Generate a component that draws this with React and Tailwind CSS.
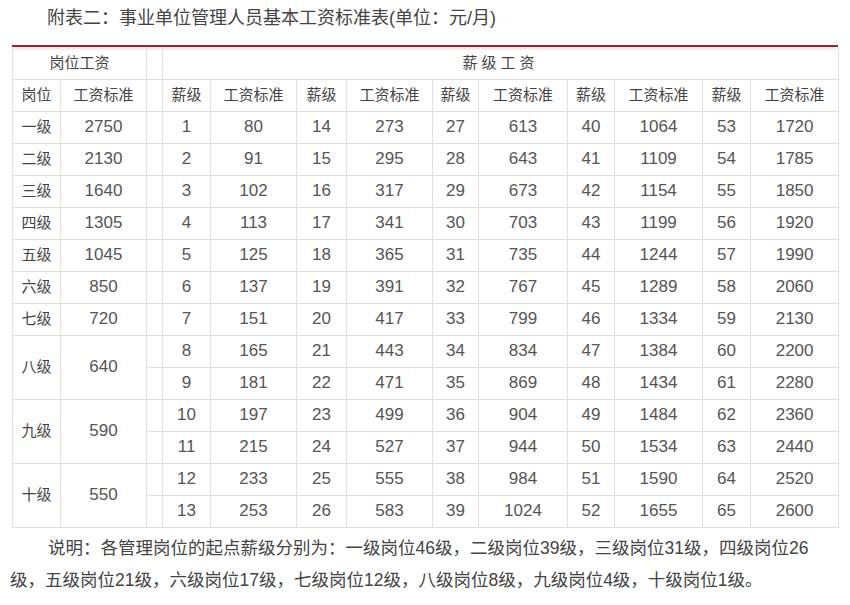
import React from "react";

const ranks = ["一级", "二级", "三级", "四级", "五级", "六级", "七级", "八级", "九级", "十级"];
const rankPay = [2750, 2130, 1640, 1305, 1045, 850, 720, 640, 590, 550];

const pay = [
  80, 91, 102, 113, 125, 137, 151, 165, 181, 197, 215, 233, 253,
  273, 295, 317, 341, 365, 391, 417, 443, 471, 499, 527, 555, 583,
  613, 643, 673, 703, 735, 767, 799, 834, 869, 904, 944, 984, 1024,
  1064, 1109, 1154, 1199, 1244, 1289, 1334, 1384, 1434, 1484, 1534, 1590, 1655,
  1720, 1785, 1850, 1920, 1990, 2060, 2130, 2200, 2280, 2360, 2440, 2520, 2600,
];

// rows 0-6 have their own rank; rows 7-12 share ranks in pairs
function rankCell(row) {
  if (row < 7) return { idx: row, span: 1 };
  if ((row - 7) % 2 === 0) return { idx: 7 + (row - 7) / 2, span: 2 };
  return null;
}

const cell = "border border-[#dedede] h-[32px] p-0 text-center align-middle";
const widths = ["w-[48px]", "w-[86px]", "w-[16px]", "w-[48px]", "w-[86px]", "w-[50px]", "w-[86px]", "w-[46px]", "w-[89px]", "w-[47px]", "w-[88px]", "w-[48px]", "w-[88px]"];

export default function App() {
  const rows = Array.from({ length: 13 }, (_, i) => i);

  return (
    <div
      className="w-[850px] h-[605px] bg-white overflow-hidden text-[#555]"
      style={{ fontFamily: '"Liberation Sans", "Noto Sans CJK SC", sans-serif' }}
    >
      <div className="h-[36px] leading-[36px] pl-[47px] text-[18px] text-[#444]">
        附表二：事业单位管理人员基本工资标准表(单位：元/月)
      </div>

      <div className="ml-[12px] mr-[12px] mt-[9px] h-[2px] bg-[#8c2a34] shadow-[0_2px_3px_#f1cdd1]" />

      <table className="ml-[12px] w-[826px] table-fixed border-collapse">
        <colgroup>
          {widths.map((w, i) => (
            <col key={i} className={w} />
          ))}
        </colgroup>
        <tbody>
          <tr>
            <td colSpan={2} className={`${cell} border-t-0 text-[15px] text-[#444]`}>
              岗位工资
            </td>
            <td className={`${cell} border-t-0`} />
            <td colSpan={10} className={`${cell} border-t-0 text-[15px] text-[#444] tracking-[4px]`}>
              薪级工资
            </td>
          </tr>
          <tr className="text-[15px] text-[#444]">
            <td className={cell}>岗位</td>
            <td className={cell}>工资标准</td>
            <td className={cell} />
            {[0, 1, 2, 3, 4].map((k) => (
              <React.Fragment key={k}>
                <td className={cell}>薪级</td>
                <td className={cell}>工资标准</td>
              </React.Fragment>
            ))}
          </tr>
          {rows.map((r) => {
            const rc = rankCell(r);
            return (
              <tr key={r} className="text-[17px]">
                {rc && (
                  <>
                    <td rowSpan={rc.span} className={`${cell} text-[15px] text-[#444]`}>
                      {ranks[rc.idx]}
                    </td>
                    <td rowSpan={rc.span} className={cell}>
                      {rankPay[rc.idx]}
                    </td>
                  </>
                )}
                <td className={cell} />
                {[0, 1, 2, 3, 4].map((k) => {
                  const level = k * 13 + r + 1;
                  return (
                    <React.Fragment key={k}>
                      <td className={cell}>{level}</td>
                      <td className={cell}>{pay[level - 1]}</td>
                    </React.Fragment>
                  );
                })}
              </tr>
            );
          })}
        </tbody>
      </table>

      <div className="mt-[4px] text-[17.5px] leading-[32px] text-[#444] whitespace-nowrap">
        <div className="pl-[48px]">
          说明：各管理岗位的起点薪级分别为：一级岗位46级，二级岗位39级，三级岗位31级，四级岗位26
        </div>
        <div className="pl-[10px]">
          级，五级岗位21级，六级岗位17级，七级岗位12级，八级岗位8级，九级岗位4级，十级岗位1级。
        </div>
      </div>
    </div>
  );
}
